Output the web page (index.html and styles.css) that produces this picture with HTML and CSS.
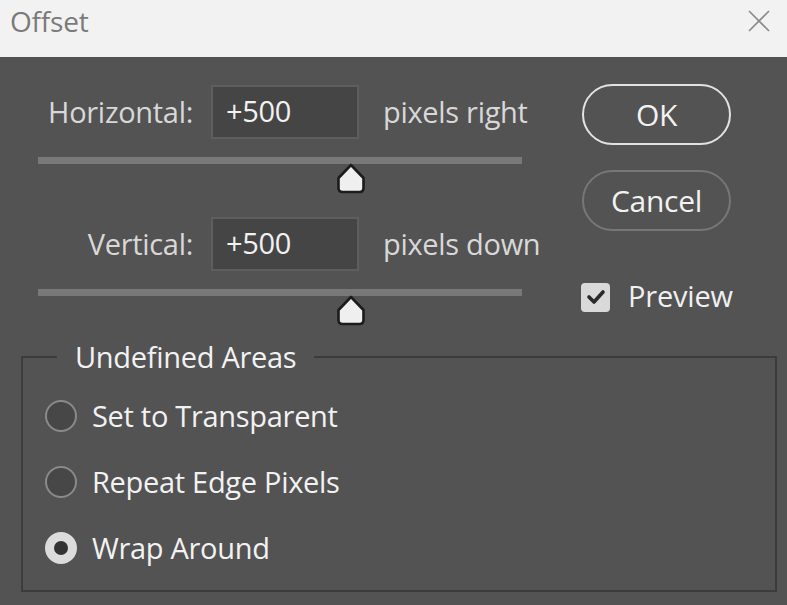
FILE: index.html
```html
<!DOCTYPE html>
<html>
<head>
<meta charset="utf-8">
<title>Offset</title>
<link rel="stylesheet" href="styles.css">
</head>
<body>
<div class="dialog">
  <div class="titlebar">
    <span class="title">Offset</span>
    <svg class="close" width="24" height="24" viewBox="0 0 24 24"><path d="M2 2 L22 22 M22 2 L2 22" stroke="#8a8a8a" stroke-width="1.6" fill="none"/></svg>
  </div>
  <div class="body">
    <div class="top">
      <div class="controls">
        <div class="row">
          <span class="label">Horizontal:</span>
          <div class="input">+500</div>
          <span class="unit">pixels right</span>
        </div>
        <div class="slider">
          <div class="track"></div>
          <svg class="thumb" width="30" height="31" viewBox="0 0 30 31"><path d="M15 2 L27.5 15 L27.5 25 Q27.5 29 23.5 29 L6.5 29 Q2.5 29 2.5 25 L2.5 15 Z" fill="#efefef" stroke="#1c1c1c" stroke-width="2.6" stroke-linejoin="round"/></svg>
        </div>
        <div class="row row2">
          <span class="label">Vertical:</span>
          <div class="input">+500</div>
          <span class="unit">pixels down</span>
        </div>
        <div class="slider">
          <div class="track"></div>
          <svg class="thumb" width="30" height="31" viewBox="0 0 30 31"><path d="M15 2 L27.5 15 L27.5 25 Q27.5 29 23.5 29 L6.5 29 Q2.5 29 2.5 25 L2.5 15 Z" fill="#efefef" stroke="#1c1c1c" stroke-width="2.6" stroke-linejoin="round"/></svg>
        </div>
      </div>
      <div class="buttons">
        <div class="btn btn-ok">OK</div>
        <div class="btn btn-cancel">Cancel</div>
        <div class="check">
          <span class="box"><svg width="20" height="16" viewBox="0 0 20 16"><path d="M3 8 L8 13 L17 3" stroke="#2a2a2a" stroke-width="3.6" fill="none" stroke-linecap="round" stroke-linejoin="round"/></svg></span>
          <span class="check-label">Preview</span>
        </div>
      </div>
    </div>
    <fieldset class="group">
      <legend>Undefined Areas</legend>
      <div class="radio"><span class="dot"></span><span class="radio-label">Set to Transparent</span></div>
      <div class="radio"><span class="dot"></span><span class="radio-label">Repeat Edge Pixels</span></div>
      <div class="radio"><span class="dot on"></span><span class="radio-label">Wrap Around</span></div>
    </fieldset>
  </div>
</div>
</body>
</html>
```

FILE: styles.css
```css
html, body {
  margin: 0;
  padding: 0;
  width: 787px;
  height: 605px;
  overflow: hidden;
  background: #535353;
}
body {
  font-family: "Open Sans", "Noto Sans", sans-serif;
}
.dialog {
  width: 787px;
  height: 605px;
  display: flex;
  flex-direction: column;
}
.titlebar {
  height: 57px;
  background: #f2f2f2;
  display: flex;
  align-items: center;
  justify-content: space-between;
  padding: 0 16px 0 10px;
  box-sizing: border-box;
}
.title {
  font-size: 28px;
  color: #7a7a7a;
  margin-top: -16px;
  letter-spacing: -0.2px;
}
.close {
  margin-top: -16px;
}
.body {
  flex: 1;
  display: flex;
  flex-direction: column;
}
.top {
  display: flex;
}
.controls {
  width: 560px;
  padding-top: 28px;
}
.row {
  display: flex;
  align-items: center;
  height: 54px;
}
.row2 {
  margin-top: 22px;
}
.label {
  width: 193px;
  text-align: right;
  font-size: 29px;
  color: #d8d8d8;
  letter-spacing: -0.3px;
  margin-top: -2px;
}
.input {
  margin-left: 18px;
  width: 148px;
  height: 54px;
  box-sizing: border-box;
  background: #454545;
  border: 2px solid #5e5e5e;
  color: #f2f2f2;
  font-size: 29px;
  padding-left: 13px;
  line-height: 48px;
  letter-spacing: -0.3px;
}
.unit {
  margin-left: 24px;
  font-size: 29px;
  color: #d8d8d8;
  letter-spacing: -0.3px;
  margin-top: -2px;
}
.slider {
  position: relative;
  margin-top: 18px;
  margin-left: 38px;
  width: 484px;
  height: 38px;
}
.track {
  height: 7px;
  background: #797979;
}
.thumb {
  position: absolute;
  left: 298px;
  top: 6px;
}
.buttons {
  padding-top: 27px;
  margin-left: 22px;
  display: flex;
  flex-direction: column;
}
.btn {
  width: 149px;
  height: 61px;
  box-sizing: border-box;
  border-radius: 31px;
  display: flex;
  align-items: center;
  justify-content: center;
  font-size: 30px;
  color: #f2f2f2;
  letter-spacing: -0.3px;
}
.btn-ok {
  border: 2px solid #e2e2e2;
}
.btn-cancel {
  margin-top: 25px;
  border: 2px solid #777777;
}
.check {
  margin-top: 48px;
  display: flex;
  align-items: center;
}
.box {
  width: 29px;
  height: 29px;
  border-radius: 4px;
  background: #d9d9d9;
  display: flex;
  align-items: center;
  justify-content: center;
  margin-left: -1px;
}
.check-label {
  margin-left: 18px;
  font-size: 29px;
  color: #f0f0f0;
  letter-spacing: -0.2px;
  margin-top: -3px;
}
.group {
  margin: 10px 0 0 21px;
  width: 756px;
  height: 255px;
  box-sizing: border-box;
  border: 2px solid #3c3c3c;
  padding: 0 0 0 22px;
  min-width: 0;
}
.group legend {
  margin-left: 12px;
  padding: 0 18px;
  font-size: 29px;
  color: #f2f2f2;
  letter-spacing: -0.3px;
}
.radio {
  display: flex;
  align-items: center;
  height: 66px;
}
.radio:first-of-type {
  margin-top: 7px;
}
.dot {
  width: 32px;
  height: 32px;
  box-sizing: border-box;
  border-radius: 50%;
  border: 2px solid #8a8a8a;
  background: #474747;
  position: relative;
}
.dot.on {
  background: #dcdcdc;
  border-color: #dcdcdc;
}
.dot.on::after {
  content: "";
  position: absolute;
  left: 7px;
  top: 7px;
  width: 14px;
  height: 14px;
  border-radius: 50%;
  background: #333;
}
.radio-label {
  margin-left: 15px;
  font-size: 29px;
  color: #f2f2f2;
  letter-spacing: -0.3px;
  margin-top: -2px;
}
```
